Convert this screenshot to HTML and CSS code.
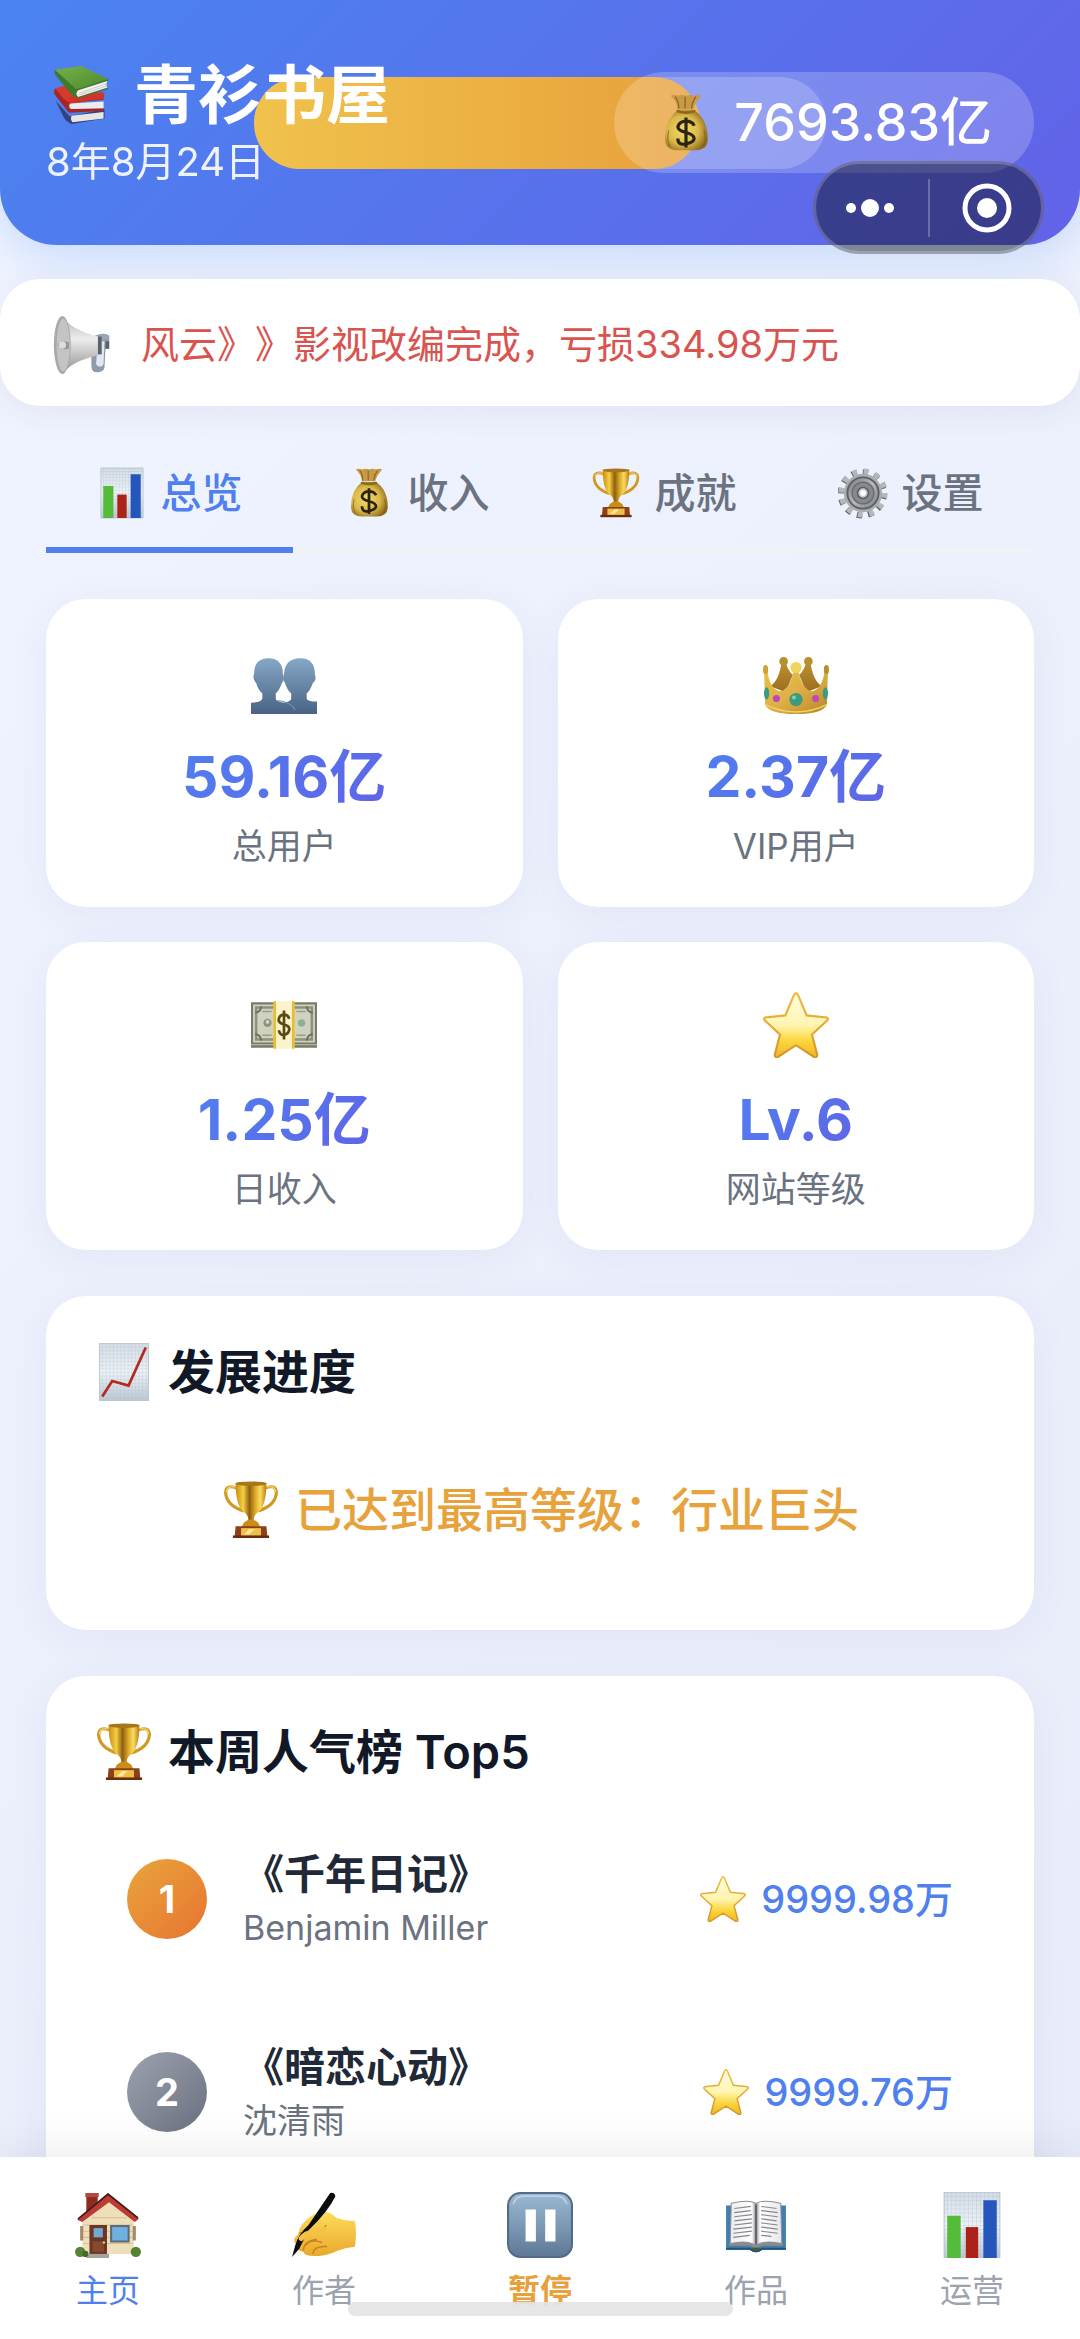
FILE: index.html
```html
<!DOCTYPE html>
<html lang="zh-CN">
<head>
<meta charset="utf-8">
<meta name="viewport" content="width=device-width, initial-scale=1">
<title>青衫书屋</title>
<link rel="stylesheet" href="styles.css">
</head>
<body>
<!-- icon sprite -->
<svg class="sprite" width="0" height="0" aria-hidden="true">
  <defs>
    <linearGradient id="gold" x1="0" x2="1" y1="0" y2="0">
      <stop offset="0" stop-color="#c98c10"/><stop offset=".25" stop-color="#f5cf45"/>
      <stop offset=".45" stop-color="#8f5f0e"/><stop offset=".65" stop-color="#e0ad2a"/>
      <stop offset=".8" stop-color="#f8dc60"/><stop offset="1" stop-color="#b87c12"/>
    </linearGradient>
    <linearGradient id="star" x1="0" x2="0" y1="0" y2="1">
      <stop offset="0" stop-color="#fffbe0"/><stop offset=".5" stop-color="#fff5b0"/>
      <stop offset=".75" stop-color="#fbd63c"/><stop offset="1" stop-color="#f2b425"/>
    </linearGradient>
    <linearGradient id="star-edge" x1="0" x2="0" y1="0" y2="1">
      <stop offset="0" stop-color="#f2bb3c"/><stop offset="1" stop-color="#d3962c"/>
    </linearGradient>
    <linearGradient id="paper" x1="0" x2="0" y1="0" y2="1">
      <stop offset="0" stop-color="#d3dce5"/><stop offset=".5" stop-color="#edf2f7"/><stop offset="1" stop-color="#bcc7d1"/>
    </linearGradient>
    <linearGradient id="people" x1="0" x2="0" y1="0" y2="1">
      <stop offset="0" stop-color="#86a8c6"/><stop offset="1" stop-color="#486283"/>
    </linearGradient>
    <linearGradient id="crown" x1="0" x2="1" y1="0" y2="1">
      <stop offset="0" stop-color="#e9c046"/><stop offset=".5" stop-color="#dfb046"/><stop offset="1" stop-color="#b88628"/>
    </linearGradient>
    <linearGradient id="crown-back" x1="0" x2="0" y1="0" y2="1">
      <stop offset="0" stop-color="#bd9230"/><stop offset="1" stop-color="#9c6c20"/>
    </linearGradient>
    <linearGradient id="pause" x1="0" x2="0" y1="0" y2="1">
      <stop offset="0" stop-color="#9cb9d3"/><stop offset=".5" stop-color="#7c99b5"/><stop offset="1" stop-color="#5e7895"/>
    </linearGradient>
    <linearGradient id="horn" x1="0" x2="0" y1="0" y2="1">
      <stop offset="0" stop-color="#b5b5b5"/><stop offset=".4" stop-color="#ededed"/><stop offset="1" stop-color="#8d8d8d"/>
    </linearGradient>
    <linearGradient id="steel" x1="0" x2="1" y1="0" y2="1">
      <stop offset="0" stop-color="#74777b"/><stop offset=".5" stop-color="#b6b9bd"/><stop offset="1" stop-color="#787b80"/>
    </linearGradient>
    <linearGradient id="hand" x1="0" x2="0" y1="0" y2="1">
      <stop offset="0" stop-color="#ffdc5a"/><stop offset="1" stop-color="#e9a82e"/>
    </linearGradient>
    <linearGradient id="green" x1="0" x2="1" y1="0" y2="1">
      <stop offset="0" stop-color="#74b04a"/><stop offset="1" stop-color="#4d8c2a"/>
    </linearGradient>
    <linearGradient id="page-edge" x1="0" x2="1" y1="0" y2="0">
      <stop offset="0" stop-color="#ececf0"/><stop offset=".42" stop-color="#fff"/><stop offset=".5" stop-color="#8e8e95"/>
      <stop offset=".58" stop-color="#fff"/><stop offset="1" stop-color="#e6e6ec"/>
    </linearGradient>
    <radialGradient id="bag" cx=".42" cy=".5" r=".6">
      <stop offset="0" stop-color="#f3da6c"/><stop offset=".6" stop-color="#dbb949"/><stop offset="1" stop-color="#8d6b1c"/>
    </radialGradient>
    <pattern id="grid" width="4" height="4" patternUnits="userSpaceOnUse">
      <path d="M4 0H0V4" fill="none" stroke="#a9bac8" stroke-width=".5"/>
    </pattern>
  </defs>

  <symbol id="i-books" viewBox="0 0 64 64">
    <path d="M4 38l15 17 37-8v10l-35 6q-6-2-9-8z" fill="#33437f"/>
    <path d="M21 54l34-4v7l-33 4q-3-3-1-7z" fill="#e8e6e3"/>
    <path d="M3 25l14-4 39 10-1 4-37 7z" fill="#d8392b"/>
    <path d="M3 25q-2 4 1 8l14 18 37-2v-3l-35 1q-4-4-1-7l36-3v-5l-36 8q-8-4-11-10z" fill="#a92521"/>
    <path d="M20 41l35-2v7l-35 1q-3-3 0-6z" fill="#efedea"/>
    <path d="M18 34l37-5v7l-36 4z" fill="#d03427"/>
    <path d="M3 5L31 1l29 14-34 11z" fill="url(#green)"/>
    <path d="M3 5l23 21 34-11v2L29 28q-4 3-1 7-4 0-7-3L4 11q-2-3-1-6z" fill="#3f7a28"/>
    <path d="M28 27l31-10q-2 4 0 7l-31 10q-4-3 0-7z" fill="#f3f2ef"/>
    <path d="M29 30l29-10M29 32l30-10" stroke="#b9b6b2" stroke-width=".7"/>
    <path d="M28 35l32-10" stroke="#3f7a28" stroke-width="1.4"/>
  </symbol>

  <symbol id="i-bag" viewBox="0 0 64 64">
    <path d="M23 17Q22 8 15 2q4-2 8 0 5-2 9 0 4-2 9 0 5-2 8 0-7 7-9 15z" fill="#c99a45"/>
    <path d="M24 16Q24 8 20 3M31 16V3M38 16q1-8 5-13" stroke="#8b6524" stroke-width="1.4" fill="none"/>
    <path d="M23 18q-14 10-14 32 0 12 14 12h19q14 0 14-12 0-22-15-32z" fill="url(#bag)"/>
    <path d="M13 40q-3 12 2 18M52 40q3 12-2 18" stroke="#7b5c16" stroke-width="1.2" fill="none" opacity=".7"/>
    <path d="M23 19q9 3 18 0" stroke="#8c6a1e" stroke-width="3" stroke-linecap="round" fill="none"/>
    <path d="M41 35q-2-5-9-5t-9 6q0 4 9 6.500t9 6.500-9 6-9-6M32 26v33" stroke="#2b2412" stroke-width="3.5" fill="none"/>
  </symbol>

  <symbol id="i-horn" viewBox="0 0 64 64">
    <path d="M46 22q10-4 15 0v14h-4l-1 20q-1 5-8 5-6 0-6-7V35z" fill="#8e9ba8"/>
    <path d="M49 28h7l-1 24q-1 3-4 3t-4-3z" fill="#dfe8f0"/>
    <path d="M46 22q10-3 15 0v4H47z" fill="#9aa7b4"/>
    <path d="M57 28h4v8h-4z" fill="#59636d"/>
    <path d="M11 1q8 14 38 22v20Q19 50 12 63z" fill="url(#horn)"/>
    <path d="M49 23h4v19h-4z" fill="#5b6269"/>
    <ellipse cx="11" cy="32" rx="9" ry="31" fill="#a9a9a9"/>
    <ellipse cx="12" cy="32" rx="7" ry="28" fill="#c4c4c4"/>
    <path d="M6 32q2-6 12-3v7q-10 2-12-4z" fill="#969696"/>
    <circle cx="11" cy="32" r="4" fill="#dcdcdc"/>
  </symbol>

  <symbol id="i-chart" viewBox="0 0 64 64">
    <path d="M5 0h54v64H5z" fill="url(#paper)"/>
    <path d="M5 0h54v64H5z" fill="url(#grid)" stroke="#b9c2ca" stroke-width="1"/>
    <path d="M8 23h13v41H8z" fill="#54bb3b"/>
    <path d="M26 34h12v30H26z" fill="#ab2318"/>
    <path d="M43 8h13v56H43z" fill="#2456bb"/>
  </symbol>

  <symbol id="i-trend" viewBox="0 0 64 64">
    <path d="M5 0h54v64H5z" fill="url(#paper)"/>
    <path d="M5 0h54v64H5z" fill="url(#grid)" stroke="#b9c2ca" stroke-width="1"/>
    <path d="M8 59l11-17 18 5L56 5" fill="none" stroke="#b22a20" stroke-width="3"/>
  </symbol>

  <symbol id="i-trophy" viewBox="0 0 64 64">
    <path d="M17 8Q4 3 4 13q1 14 20 20M47 8q13-5 13 5-1 14-20 20" fill="none" stroke="#d09a22" stroke-width="3.5"/>
    <path d="M17 7Q5 4 5 12M47 7q12-3 12 5" fill="none" stroke="#f2d063" stroke-width="1.4"/>
    <path d="M15 2h34q0 27-10 33-4 3-4 8l1 8h-8l1-8q0-5-4-8Q15 29 15 2z" fill="url(#gold)"/>
    <ellipse cx="32" cy="3" rx="17" ry="2.5" fill="#a8761a"/>
    <path d="M24 46q8-7 16 0l3 6H21z" fill="#c98d18"/>
    <path d="M15 50h34l1 11H14z" fill="#8c3f18"/>
    <path d="M12 60h40v3H12z" fill="#6b2b10"/>
    <path d="M21 52h22v8H21z" fill="#eec04a"/>
    <path d="M24 59l6-6h6l-6 6z" fill="#fbe69a"/>
  </symbol>

  <symbol id="i-gear" viewBox="0 0 64 64">
    <circle cx="31" cy="33" r="27.5" fill="none" stroke="#5f6266" stroke-width="8" stroke-dasharray="6.6 7.8"/>
    <circle cx="32" cy="32" r="27.5" fill="none" stroke="#b4b7bc" stroke-width="8" stroke-dasharray="6.2 8.2"/>
    <circle cx="32" cy="32" r="24.5" fill="#a9acb1"/>
    <circle cx="32" cy="32" r="20" fill="url(#steel)" stroke="#5c5f63" stroke-width="2.4"/>
    <circle cx="32" cy="32" r="14" fill="#85888d" stroke="#66696e" stroke-width="1.6"/>
    <circle cx="32" cy="32" r="7" fill="#c9cbce" stroke="#595c60" stroke-width="2"/>
    <circle cx="32" cy="32" r="3.6" fill="#fff"/>
  </symbol>

  <symbol id="i-people" viewBox="0 0 64 64">
    <path d="M48 9q14 0 14 16 2 5-2 8-3 8-6 10v5q0 3 10 3v12H24V53q15-1 15-5v-5q-4-3-6-10-3-4-1-9Q33 9 48 9z" fill="url(#people)"/>
    <path d="M17 9q14 0 14 16 2 5-1 8-3 8-6 10v5q0 3 8 4 8 2 12 10v1H0V52q10 0 11-4v-5q-4-3-6-10-4-4-2-9Q3 9 17 9z" fill="url(#people)"/>
    <path d="M26 50q12 1 17 9" fill="none" stroke="#7693b1" stroke-width="1"/>
  </symbol>

  <symbol id="i-crown" viewBox="0 0 64 64">
    <path d="M7 36q9-6 11-24h4q2 9 7 13l-7 17zM57 36q-9-6-11-24h-4q-2 9-7 13l7 17z" fill="url(#crown-back)"/>
    <path d="M1 20h3q3 21 14 21 10-5 12-22h4q2 17 12 22 11 0 14-21h3l-1 34q-4 9-30 9T2 54z" fill="url(#crown)"/>
    <circle cx="20" cy="12" r="4.2" fill="#b9902f"/><circle cx="44" cy="12" r="4.2" fill="#b9902f"/>
    <circle cx="32" cy="18" r="5.4" fill="#f0d35a"/>
    <ellipse cx="2.5" cy="20" rx="2.5" ry="4.5" fill="#cba336"/><ellipse cx="61.5" cy="20" rx="2.5" ry="4.5" fill="#b58e2d"/>
    <path d="M2 54q14 7 30 7t30-7" fill="none" stroke="#f1d564" stroke-width="1.4"/>
    <circle cx="32" cy="49" r="6.4" fill="#3c9b7c"/><circle cx="30" cy="47" r="2" fill="#7fd0b3"/>
    <circle cx="13" cy="48" r="3.4" fill="#b94abb"/><circle cx="51" cy="48" r="3.4" fill="#b94abb"/>
    <ellipse cx="3.5" cy="43" rx="2.5" ry="6" fill="#3c9b7c"/><ellipse cx="60.5" cy="43" rx="2.5" ry="6" fill="#3c9b7c"/>
  </symbol>

  <symbol id="i-cash" viewBox="0 0 64 64">
    <path d="M0 10h64v44H0z" fill="#7c7a68"/>
    <path d="M2 12h60v37H2z" fill="#d0d2c0"/>
    <path d="M5 15h54v31H5z" fill="none" stroke="#8f917d" stroke-width="2.4"/>
    <path d="M0 51h64" stroke="#b5b4a2" stroke-width="1.2"/>
    <path d="M4 20q5 0 6-6M4 41q5 0 6 6M60 20q-5 0-6-6M60 41q-5 0-6 6" stroke="#6f715f" stroke-width="2" fill="none"/>
    <circle cx="16" cy="30" r="4" fill="#8c9182"/><circle cx="16" cy="29" r="1.8" fill="#d5d7c6"/>
    <circle cx="49" cy="30" r="3.5" fill="#8cae98"/>
    <path d="M11 19h9M44 19h9M11 42h9M44 42h9" stroke="#9a9c8a" stroke-width="1.4"/>
    <path d="M22 9h20v46H22z" fill="#fbf3cb"/>
    <path d="M23 9v46M41 9v46" stroke="#e7bd2e" stroke-width="2.6"/>
    <path d="M37 26q-1-4-5-4t-5 4 5 5.500 5 5.500-5 4.500-5-4.500M32 18v28" stroke="#594a12" stroke-width="2.6" fill="none"/>
  </symbol>

  <symbol id="i-star" viewBox="1 1 62 62">
    <path d="M32 2q1 0 2 2l8 19 19 2q2 1 0 3L47 41l5 19q0 3-3 2L32 51 15 62q-3 1-3-2l5-19L3 28q-2-2 0-3l19-2 8-19q1-2 2-2z" fill="url(#star)" stroke="url(#star-edge)" stroke-width="2"/>
  </symbol>

  <symbol id="i-home" viewBox="0 0 64 64">
    <path d="M11 3h11v22H11z" fill="#8f2a20"/><path d="M10 1h13v4H10z" fill="#b5483a"/>
    <path d="M7 24L33 5l24 19v36H7z" fill="#efdfb9"/>
    <path d="M8 32h48M8 38h48M8 44h48M8 50h48M16 25h34" stroke="#d3c096" stroke-width="1"/>
    <path d="M2 27L32 1l30 25-4 3L33 10 7 29z" fill="#bd3b32"/>
    <path d="M3 26L32 2l29 23" fill="none" stroke="#3b1c18" stroke-width="1.6"/>
    <path d="M14 32h17v29H14z" fill="#6c3625"/><path d="M18 35h9v9h-9z" fill="#73a9d2"/>
    <path d="M17 48h11v10H17z" fill="#864a33"/><circle cx="28" cy="49" r="1.2" fill="#ecc766"/>
    <path d="M34 32h19v17H34z" fill="#5c6c78"/><path d="M36 34h15v13H36z" fill="#6fb0e2"/>
    <path d="M5 33h3v14H5zM56 33h3v14h-3z" fill="#a5876a"/>
    <path d="M11 60h22v4H11z" fill="#a5a29c"/>
    <circle cx="5" cy="58" r="5" fill="#568233"/><circle cx="59" cy="58" r="5" fill="#568233"/><circle cx="10" cy="60" r="3" fill="#446b28"/>
  </symbol>

  <symbol id="i-write" viewBox="0 0 64 64">
    <path d="M30 19q6-1 14 6 7 3 18 3 2 12 0 25-10 1-17 4-7 4-18 5-14 1-15-4-8-1-7-7-5-5 2-10 1-11 16-20z" fill="url(#hand)"/>
    <path d="M8 40q10-3 16 0 7-1 10-8M12 57q0-9 13-11M14 52q5-7 16-3M21 60q1-8 14-7" fill="none" stroke="#c88519" stroke-width="1.6"/>
    <path d="M38 1q4-1 5 3-7 15-26 33L8 55l-7 8 3-11q3-11 13-20z" fill="#0c0c0c"/>
    <path d="M10 45q5-6 9-5l4 1q6-2 9-5" fill="none" stroke="#f3c246" stroke-width="5" stroke-linecap="round"/>
  </symbol>

  <symbol id="i-pause" viewBox="0 0 64 64">
    <rect x="1" y="1" width="62" height="62" rx="12" fill="url(#pause)" stroke="#526b86" stroke-width="2"/>
    <path d="M6 12q2-8 10-8h32q8 0 10 8" fill="none" stroke="#bed2e3" stroke-width="1.5"/>
    <path d="M18 17h10v31H18zM37 17h10v31H37z" fill="#fff"/>
  </symbol>

  <symbol id="i-book" viewBox="0 0 64 64">
    <path d="M3 13h58v43H38q-6 5-12 0H3z" fill="#3f7fae"/>
    <path d="M3 55h23q6 5 12 0h23" fill="none" stroke="#245474" stroke-width="2"/>
    <path d="M6 49h52v3H38q-6 4-12 0H6z" fill="#8d8c8b"/>
    <path d="M8 11q17-4 24 0 7-4 24 0l1 39q-17-4-25 2-8-6-25-2z" fill="url(#page-edge)" stroke="#8c8f96" stroke-width="1"/>
    <path d="M11 16l16-2M11 20l16-2M11 24l17-2M11 28l17-2M11 32l17-2M10 36l18-2M10 40l18-2M10 44l16-2M37 14l15 2M37 18l16 2M37 22l16 2M37 26l15 2M37 30l16 2M37 34l16 2M37 38l16 2M37 42l10 1" stroke="#86868d" stroke-width="1.1"/>
    <path d="M32 12v39" stroke="#55555c" stroke-width="1.5"/>
    <path d="M27 54q5 7 10 0z" fill="#4a5a38"/>
  </symbol>
</svg>

<div class="page">
  <header class="header">
    <div class="progress"><div class="progress-fill" style="width: 78%"></div></div>
    <div class="header-row">
      <div>
        <h1 class="site-name"><svg class="icon-xl"><use href="#i-books"/></svg>青衫书屋</h1>
        <div class="date">8年8月24日</div>
      </div>
      <div class="money"><svg class="icon-md"><use href="#i-bag"/></svg>7693.83亿</div>
    </div>
    <div class="capsule">
      <button class="capsule-btn" aria-label="更多">
        <svg width="50" height="20" viewBox="0 0 50 20"><g fill="#fff"><circle cx="6" cy="10" r="5"/><circle cx="25" cy="10" r="9"/><circle cx="44" cy="10" r="5"/></g></svg>
      </button>
      <span class="capsule-line"></span>
      <button class="capsule-btn" aria-label="关闭">
        <svg width="50" height="50" viewBox="0 0 50 50"><circle cx="25" cy="25" r="22" fill="none" stroke="#fff" stroke-width="5"/><circle cx="25" cy="25" r="10" fill="#fff"/></svg>
      </button>
    </div>
  </header>

  <div class="notice"><svg class="icon-xl"><use href="#i-horn"/></svg><span>风云》》影视改编完成，亏损334.98万元</span></div>

  <div class="tabs">
    <button class="tab active"><svg class="icon-tab"><use href="#i-chart"/></svg>总览</button>
    <button class="tab"><svg class="icon-tab"><use href="#i-bag"/></svg>收入</button>
    <button class="tab"><svg class="icon-tab"><use href="#i-trophy"/></svg>成就</button>
    <button class="tab"><svg class="icon-tab"><use href="#i-gear"/></svg>设置</button>
  </div>

  <main class="content">
    <div class="stats">
      <div class="stat">
        <svg class="icon-lg"><use href="#i-people"/></svg>
        <div class="stat-value">59.16亿</div>
        <div class="stat-label">总用户</div>
      </div>
      <div class="stat">
        <svg class="icon-lg"><use href="#i-crown"/></svg>
        <div class="stat-value">2.37亿</div>
        <div class="stat-label">VIP用户</div>
      </div>
      <div class="stat">
        <svg class="icon-lg"><use href="#i-cash"/></svg>
        <div class="stat-value">1.25亿</div>
        <div class="stat-label">日收入</div>
      </div>
      <div class="stat">
        <svg class="icon-lg"><use href="#i-star"/></svg>
        <div class="stat-value">Lv.6</div>
        <div class="stat-label">网站等级</div>
      </div>
    </div>

    <section class="card">
      <h2 class="card-title"><svg class="icon-md"><use href="#i-trend"/></svg>发展进度</h2>
      <div class="max-level"><svg class="icon-md"><use href="#i-trophy"/></svg>已达到最高等级：行业巨头</div>
    </section>

    <section class="card">
      <h2 class="card-title"><svg class="icon-md"><use href="#i-trophy"/></svg>本周人气榜 Top5</h2>
      <ol class="rank">
        <li class="rank-item">
          <span class="badge badge-gold">1</span>
          <div class="book">
            <div class="book-name">《千年日记》</div>
            <div class="book-author">Benjamin Miller</div>
          </div>
          <div class="score"><svg class="icon-sm"><use href="#i-star"/></svg>9999.98万</div>
        </li>
        <li class="rank-item">
          <span class="badge badge-silver">2</span>
          <div class="book">
            <div class="book-name">《暗恋心动》</div>
            <div class="book-author">沈清雨</div>
          </div>
          <div class="score"><svg class="icon-sm"><use href="#i-star"/></svg>9999.76万</div>
        </li>
      </ol>
    </section>
  </main>
</div>

<nav class="nav">
  <a class="nav-item active" href="#"><svg class="icon-lg"><use href="#i-home"/></svg>主页</a>
  <a class="nav-item" href="#"><svg class="icon-lg"><use href="#i-write"/></svg>作者</a>
  <button class="nav-item pause"><svg class="icon-lg"><use href="#i-pause"/></svg>暂停</button>
  <a class="nav-item" href="#"><svg class="icon-lg"><use href="#i-book"/></svg>作品</a>
  <a class="nav-item" href="#"><svg class="icon-lg"><use href="#i-chart"/></svg>运营</a>
  <div class="home-bar"></div>
</nav>
</body>
</html>
```
FILE: styles.css
```css
* {
  box-sizing: border-box;
}

body {
  margin: 0;
  height: 100vh;
  display: flex;
  flex-direction: column;
  font-family: Inter, "Noto Sans CJK SC", sans-serif;
  color: #1f2937;
  background: linear-gradient(135deg, #f0f4ff 0%, #e8ecfa 100%);
  text-spacing-trim: space-all;
}

h1, h2, ol {
  margin: 0;
  padding: 0;
}

button {
  border: 0;
  padding: 0;
  background: none;
  font-family: inherit;
  cursor: pointer;
}

svg {
  flex: none;
}

.sprite {
  position: absolute;
}

.icon-xl {
  width: 72px;
  height: 60px;
}

.icon-lg {
  width: 66px;
  height: 66px;
}

.icon-md {
  width: 60px;
  height: 58px;
}

.icon-tab {
  width: 50px;
  height: 52px;
}

.icon-sm {
  width: 48px;
  height: 46px;
}

.page {
  flex: 1;
  min-height: 0;
  overflow-y: auto;
  scrollbar-width: none;
}

/* header */

.header {
  position: relative;
  padding: 56px 46px;
  color: #fff;
  background: linear-gradient(135deg, #4a84f0 0%, #6362e8 100%);
  border-radius: 0 0 56px 56px;
  box-shadow: 0 12px 46px rgba(59, 130, 246, 0.22);
}

.header-row {
  position: relative;
  display: flex;
  align-items: center;
  justify-content: space-between;
}

.site-name {
  display: flex;
  align-items: center;
  gap: 16px;
  font-size: 64px;
  line-height: 78px;
  font-weight: 600;
}

.date {
  font-size: 40px;
  line-height: 55px;
  opacity: 0.9;
}

.progress {
  position: absolute;
  top: 77px;
  left: 0;
  right: 0;
  width: 53%;
  height: 92px;
  margin: 0 auto;
  border-radius: 46px;
  background: rgba(255, 255, 255, 0.2);
}

.progress-fill {
  height: 100%;
  border-radius: 46px;
  background: linear-gradient(90deg, #f0c24c, #e8a03c);
}

.money {
  display: flex;
  align-items: center;
  gap: 18px;
  padding: 0 42px;
  font-size: 52px;
  line-height: 101px;
  font-weight: 500;
  border-radius: 51px;
  background: rgba(255, 255, 255, 0.2);
}

.capsule {
  position: absolute;
  top: 161px;
  right: 36px;
  width: 231px;
  height: 93px;
  display: flex;
  align-items: center;
  border: 3px solid rgba(255, 255, 255, 0.2);
  border-radius: 47px;
  background: rgba(0, 0, 0, 0.4);
}

.capsule-btn {
  flex: 1;
  display: flex;
  justify-content: center;
}

.capsule-btn:first-child {
  padding-right: 4px;
}

.capsule-btn:last-child {
  padding-left: 4px;
}

.capsule-line {
  width: 2px;
  height: 58px;
  background: rgba(255, 255, 255, 0.25);
}

/* notice */

.notice {
  display: flex;
  align-items: center;
  gap: 23px;
  margin-top: 34px;
  padding: 35px 46px 31px;
  font-size: 38px;
  line-height: 61px;
  color: #d9534f;
  background: #fff;
  border-radius: 40px;
  box-shadow: 0 6px 34px rgba(60, 60, 120, 0.07);
  position: relative;
}

/* tabs */

.tabs {
  display: flex;
  margin: 33px 46px 0;
}

.tab {
  flex: 1;
  display: flex;
  align-items: center;
  justify-content: center;
  gap: 14px;
  padding: 23px 0;
  font-size: 41px;
  line-height: 62px;
  font-weight: 500;
  color: #6b7280;
  border-bottom: 6px solid #eff3f8;
}

.tab.active {
  color: #4f80ee;
  border-bottom-color: #4f80ee;
}

/* content */

.content {
  display: flex;
  flex-direction: column;
  gap: 46px;
  padding: 46px;
}

.stats {
  display: grid;
  grid-template-columns: 1fr 1fr;
  gap: 35px;
}

.stat,
.card {
  background: #fff;
  border-radius: 40px;
  box-shadow: 0 8px 40px rgba(60, 70, 130, 0.06);
}

.stat {
  display: flex;
  flex-direction: column;
  align-items: center;
  padding: 50px 40px 38px;
}

.stat-value {
  margin: 22px 0 6px;
  font-size: 57px;
  line-height: 80px;
  font-weight: 700;
  color: transparent;
  background: linear-gradient(135deg, #4f80f0, #6063e6);
  -webkit-background-clip: text;
  background-clip: text;
}

.stat-label {
  font-size: 35px;
  line-height: 46px;
  color: #6b7280;
}

.card {
  padding: 44px 48px;
}

.card-title {
  display: flex;
  align-items: center;
  gap: 14px;
  margin-bottom: 30px;
  font-size: 47px;
  line-height: 64px;
  font-weight: 600;
  color: #111827;
}

.max-level {
  display: flex;
  align-items: center;
  justify-content: center;
  gap: 14px;
  padding: 46px 0;
  font-size: 47px;
  line-height: 60px;
  font-weight: 500;
  color: #e8a23c;
}

.rank {
  display: flex;
  flex-direction: column;
  gap: 23px;
  list-style: none;
}

.rank-item {
  display: flex;
  align-items: center;
  gap: 36px;
  padding: 31px 33px;
}

.badge {
  width: 80px;
  height: 80px;
  border-radius: 50%;
  font-size: 38px;
  line-height: 80px;
  font-weight: 700;
  text-align: center;
  color: #fff;
}

.badge-gold {
  background: linear-gradient(135deg, #e8a53c, #e87430);
}

.badge-silver {
  background: linear-gradient(135deg, #9ca3af, #6b7080);
}

.book {
  flex: 1;
}

.book-name {
  font-size: 41px;
  line-height: 58px;
  font-weight: 600;
}

.book-author {
  font-size: 34px;
  line-height: 50px;
  color: #6b7280;
}

.score {
  display: flex;
  align-items: center;
  gap: 14px;
  font-size: 38px;
  line-height: 50px;
  font-weight: 500;
  color: #4f80ee;
}

/* bottom nav */

.nav {
  position: relative;
  display: flex;
  padding: 35px 0 28px;
  background: #fff;
  box-shadow: 0 -6px 46px rgba(0, 0, 0, 0.08);
}

.nav-item {
  flex: 1;
  display: flex;
  flex-direction: column;
  align-items: center;
  gap: 13px;
  font-size: 32px;
  line-height: 40px;
  color: #9ca3af;
  text-decoration: none;
}

.nav-item.active {
  color: #4f80ee;
}

.nav-item.pause {
  color: #e8a03c;
  font-weight: 600;
}

.home-bar {
  position: absolute;
  left: 0;
  right: 0;
  bottom: 23px;
  width: 385px;
  height: 14px;
  margin: 0 auto;
  border-radius: 7px;
  background: rgba(228, 228, 228, 0.92);
}
```
